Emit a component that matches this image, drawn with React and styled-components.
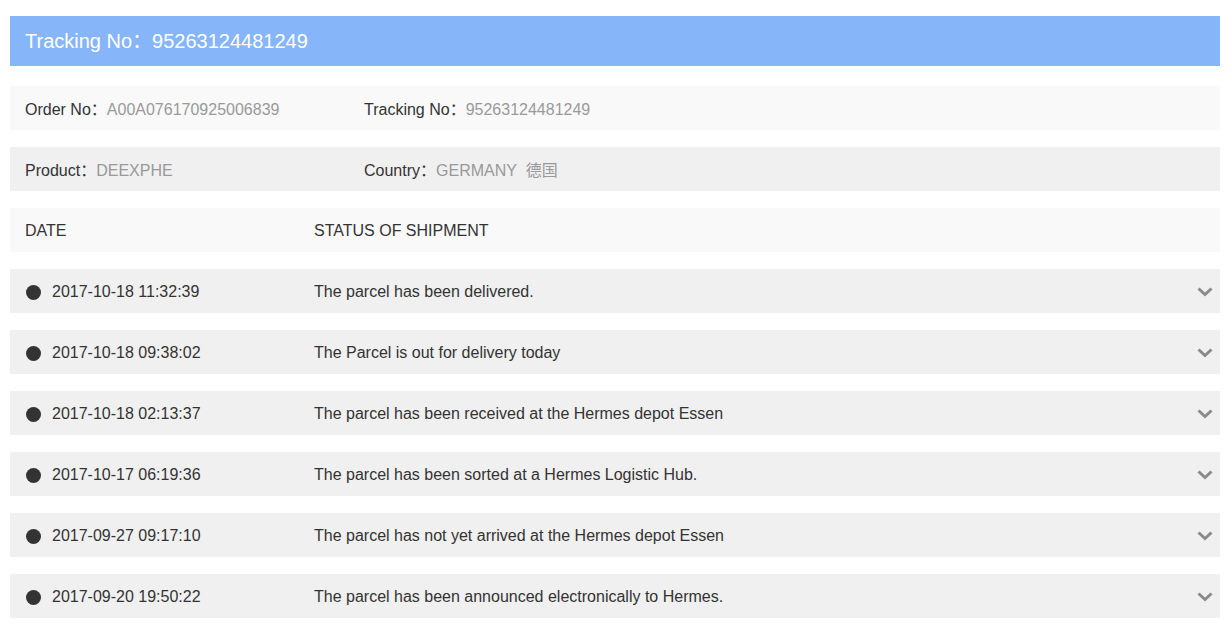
import React from "react";
import styled, { createGlobalStyle } from "styled-components";

const events = [
  { date: "2017-10-18 11:32:39", status: "The parcel has been delivered." },
  { date: "2017-10-18 09:38:02", status: "The Parcel is out for delivery today" },
  { date: "2017-10-18 02:13:37", status: "The parcel has been received at the Hermes depot Essen" },
  { date: "2017-10-17 06:19:36", status: "The parcel has been sorted at a Hermes Logistic Hub." },
  { date: "2017-09-27 09:17:10", status: "The parcel has not yet arrived at the Hermes depot Essen" },
  { date: "2017-09-20 19:50:22", status: "The parcel has been announced electronically to Hermes." },
];

const Chevron = () => (
  <svg width="16" height="10" viewBox="0 0 16 10">
    <path d="M1.5 1.5 L8 7.5 L14.5 1.5" fill="none" stroke="#8a8a8a" strokeWidth="3" />
  </svg>
);

const App = () => {
  return (
    <Page>
      <GlobalStyle />
      <Banner>Tracking No：95263124481249</Banner>

      <InfoRow $shade="#f9f9f9">
        <Field>
          Order No：<Value>A00A076170925006839</Value>
        </Field>
        <Field>
          Tracking No：<Value>95263124481249</Value>
        </Field>
      </InfoRow>

      <InfoRow $shade="#f0f0f0">
        <Field>
          Product：<Value>DEEXPHE</Value>
        </Field>
        <Field>
          Country：<Value>GERMANY{"\u00a0\u00a0"}德国</Value>
        </Field>
      </InfoRow>

      <TableRow $shade="#f9f9f9">
        <span>DATE</span>
        <span>STATUS OF SHIPMENT</span>
      </TableRow>

      {events.map((e) => (
        <TableRow key={e.date} $shade="#f0f0f0">
          <DateCell>
            <Dot />
            {e.date}
          </DateCell>
          <span>{e.status}</span>
          <Toggle>
            <Chevron />
          </Toggle>
        </TableRow>
      ))}
    </Page>
  );
};

const GlobalStyle = createGlobalStyle`
  body {
    margin: 0;
    background: #fff;
    font-family: "Liberation Sans", Arial, "Noto Sans CJK SC", sans-serif;
    color: #333;
  }
`;

const Page = styled.div`
  padding: 16px 12px 0 10px;
  display: flex;
  flex-direction: column;
  gap: 17px;
`;

const Banner = styled.div`
  height: 50px;
  box-sizing: border-box;
  background: #87b5f9;
  color: #fff;
  font-size: 20px;
  display: flex;
  align-items: center;
  padding: 0 0 3px 15px;
  margin-bottom: 3px;
`;

const InfoRow = styled.div`
  height: 44px;
  box-sizing: border-box;
  background: ${(p) => p.$shade};
  display: grid;
  grid-template-columns: 339px 1fr;
  align-items: center;
  padding-left: 15px;
  font-size: 16px;
  color: #333;
`;

const Field = styled.div`
  white-space: nowrap;
`;

const Value = styled.span`
  color: #999;
`;

const TableRow = styled.div`
  height: 44px;
  box-sizing: border-box;
  background: ${(p) => p.$shade};
  display: grid;
  grid-template-columns: 289px 1fr 40px;
  align-items: center;
  padding: 2px 0 0 15px;
  font-size: 16px;
  color: #333;
`;

const DateCell = styled.div`
  display: flex;
  align-items: center;
  gap: 11px;
  padding-left: 1px;
`;

const Dot = styled.span`
  width: 15px;
  height: 15px;
  border-radius: 50%;
  background: #333;
  flex-shrink: 0;
`;

const Toggle = styled.div`
  display: flex;
  align-items: center;
  justify-content: flex-end;
  padding-right: 7px;
`;

export default App;
